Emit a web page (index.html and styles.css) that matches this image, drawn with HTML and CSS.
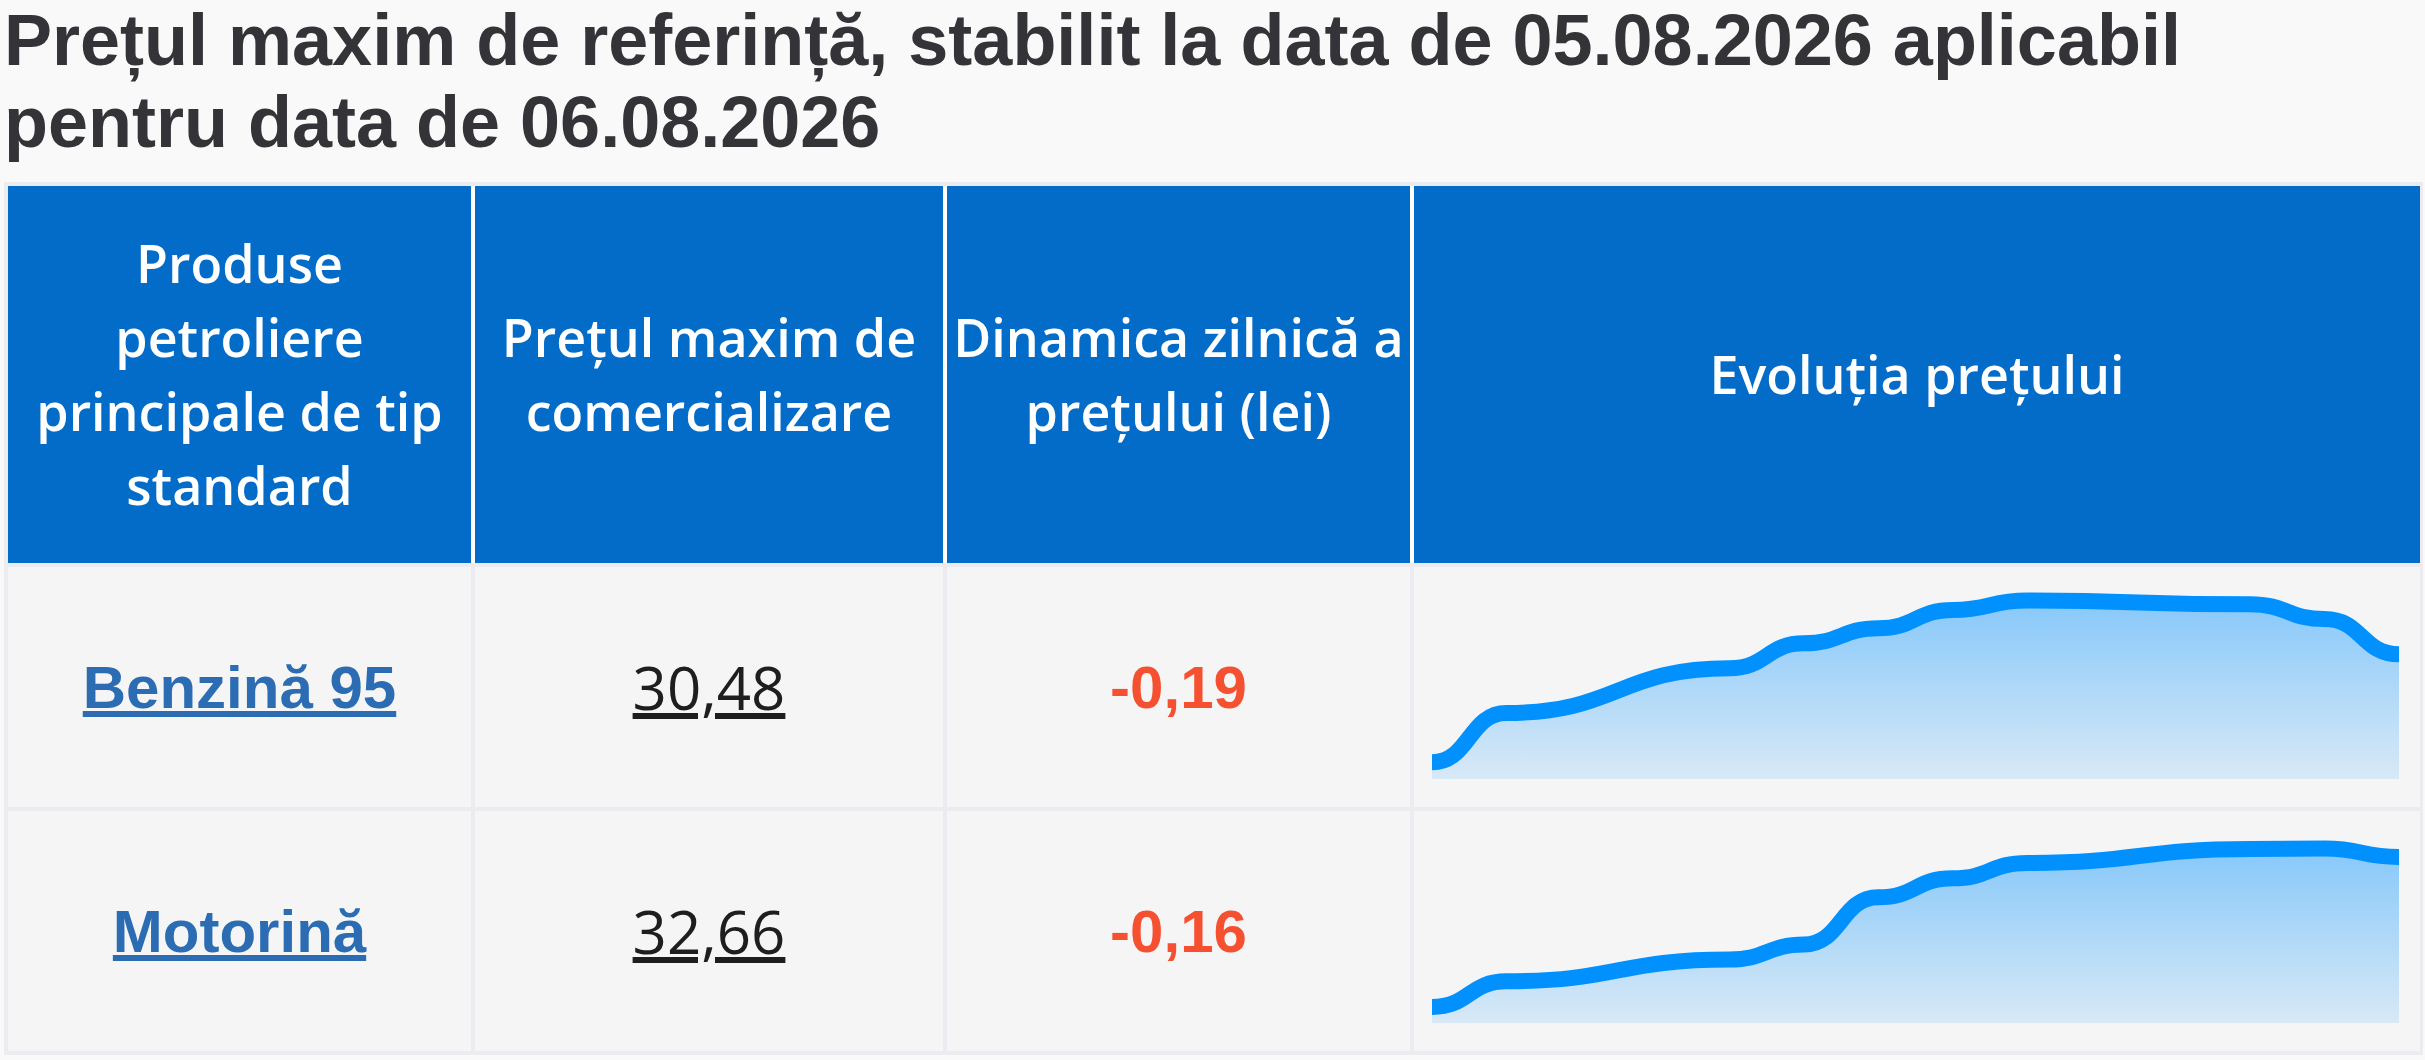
FILE: index.html
```html
<!DOCTYPE html>
<html lang="ro">
<head>
<meta charset="utf-8">
<title>Prețul maxim de referință</title>
<link rel="stylesheet" href="styles.css">
</head>
<body>
<main class="page">
  <h1 class="title">Prețul maxim de referință, stabilit la data de 05.08.2026 aplicabil pentru data de 06.08.2026</h1>
  <div class="table" role="table">
    <div class="row row-head" role="row">
      <div class="th" role="columnheader">Produse petroliere principale de tip standard</div>
      <div class="th" role="columnheader">Prețul maxim de comercializare</div>
      <div class="th" role="columnheader">Dinamica zilnică a prețului (lei)</div>
      <div class="th" role="columnheader">Evoluția prețului</div>
    </div>
    <div class="row row-body" role="row">
      <div class="td" role="cell"><a class="product" href="#">Benzină 95</a></div>
      <div class="td" role="cell"><span class="price">30,48</span></div>
      <div class="td" role="cell"><span class="delta">-0,19</span></div>
      <div class="td td-chart" role="cell">
        <svg class="chart" width="967" height="212" viewBox="0 0 967 212">
          <defs>
            <linearGradient id="fill1" x1="0" y1="0" x2="0" y2="1">
              <stop offset="0" stop-color="#0091ff" stop-opacity="0.45"/>
              <stop offset="1" stop-color="#0091ff" stop-opacity="0.12"/>
            </linearGradient>
          </defs>
          <path class="area" fill="url(#fill1)" d="M0,195.3 C37.2,195.3 37.2,146 74.4,146 C186,146 186,101.3 297.5,101.3 C334.7,101.3 334.7,76.3 371.9,76.3 C409.1,76.3 409.1,61.3 446.3,61.3 C483.5,61.3 483.5,43 520.7,43 C557.9,43 557.9,33.6 595.1,33.6 C706.7,33.6 706.7,37.3 818.2,37.3 C855.4,37.3 855.4,52 892.6,52 C929.8,52 929.8,87.3 967,87.3 L967,212 L0,212 Z"/>
          <path class="line" d="M0,195.3 C37.2,195.3 37.2,146 74.4,146 C186,146 186,101.3 297.5,101.3 C334.7,101.3 334.7,76.3 371.9,76.3 C409.1,76.3 409.1,61.3 446.3,61.3 C483.5,61.3 483.5,43 520.7,43 C557.9,43 557.9,33.6 595.1,33.6 C706.7,33.6 706.7,37.3 818.2,37.3 C855.4,37.3 855.4,52 892.6,52 C929.8,52 929.8,87.3 967,87.3"/>
        </svg>
      </div>
    </div>
    <div class="row row-body" role="row">
      <div class="td" role="cell"><a class="product" href="#">Motorină</a></div>
      <div class="td" role="cell"><span class="price">32,66</span></div>
      <div class="td" role="cell"><span class="delta">-0,16</span></div>
      <div class="td td-chart" role="cell">
        <svg class="chart" width="967" height="212" viewBox="0 0 967 212">
          <defs>
            <linearGradient id="fill2" x1="0" y1="0" x2="0" y2="1">
              <stop offset="0" stop-color="#0091ff" stop-opacity="0.45"/>
              <stop offset="1" stop-color="#0091ff" stop-opacity="0.12"/>
            </linearGradient>
          </defs>
          <path class="area" fill="url(#fill2)" d="M0,196 C37.2,196 37.2,170.3 74.4,170.3 C186,170.3 186,148.6 297.5,148.6 C334.7,148.6 334.7,133.6 371.9,133.6 C409.1,133.6 409.1,86.3 446.3,86.3 C483.5,86.3 483.5,67.3 520.7,67.3 C557.9,67.3 557.9,52 595.1,52 C706.7,52 706.7,38 818.2,38 C855.4,38 855.4,37.6 892.6,37.6 C929.8,37.6 929.8,46 967,46 L967,212 L0,212 Z"/>
          <path class="line" d="M0,196 C37.2,196 37.2,170.3 74.4,170.3 C186,170.3 186,148.6 297.5,148.6 C334.7,148.6 334.7,133.6 371.9,133.6 C409.1,133.6 409.1,86.3 446.3,86.3 C483.5,86.3 483.5,67.3 520.7,67.3 C557.9,67.3 557.9,52 595.1,52 C706.7,52 706.7,38 818.2,38 C855.4,38 855.4,37.6 892.6,37.6 C929.8,37.6 929.8,46 967,46"/>
        </svg>
      </div>
    </div>
  </div>
</main>
</body>
</html>
```

FILE: styles.css
```css
* {
  box-sizing: border-box;
}

html,
body {
  margin: 0;
  padding: 0;
  background: #f9f9f9;
}

.page {
  padding: 0 2px 0 4px;
}

.title {
  margin: 0 0 19px;
  max-width: 2300px;
  font-family: "Liberation Sans", Arial, sans-serif;
  font-weight: 700;
  font-size: 72px;
  line-height: 81.5px;
  color: #333338;
}

.table {
  display: flex;
  flex-direction: column;
  gap: 4px;
  padding: 4px 3px 4px 4px;
  background: #ebebf0;
}

.row {
  display: grid;
  grid-template-columns: 463px 468px 463px 1fr;
  gap: 4px;
}

.row-head {
  background: #ffffff;
}

.th {
  display: flex;
  align-items: center;
  justify-content: center;
  padding: 40px 0 41px;
  background: #036bc8;
  color: #ffffff;
  font-family: "Open Sans", "Noto Sans", sans-serif;
  font-weight: 600;
  font-size: 52px;
  line-height: 74px;
  text-align: center;
}

.td {
  display: flex;
  align-items: center;
  justify-content: center;
  height: 240px;
  background: #f5f5f5;
}

.td-chart {
  align-items: flex-start;
  justify-content: flex-start;
  padding-left: 18px;
}

.chart {
  display: block;
  overflow: hidden;
}

.chart .line {
  fill: none;
  stroke: #0091ff;
  stroke-width: 16;
  stroke-linejoin: round;
}

.product {
  font-family: "Liberation Sans", Arial, sans-serif;
  font-weight: 700;
  font-size: 60px;
  color: #2b6cb3;
  text-decoration: underline;
  text-decoration-thickness: 6px;
  text-underline-offset: 3px;
}

.price {
  font-family: "Open Sans", "Noto Sans", sans-serif;
  font-weight: 400;
  font-size: 60px;
  color: #1e1e1e;
  text-decoration: underline;
  text-decoration-thickness: 6px;
  text-underline-offset: 3px;
}

.delta {
  font-family: "Liberation Sans", Arial, sans-serif;
  font-weight: 700;
  font-size: 60px;
  color: #f55030;
}
```
